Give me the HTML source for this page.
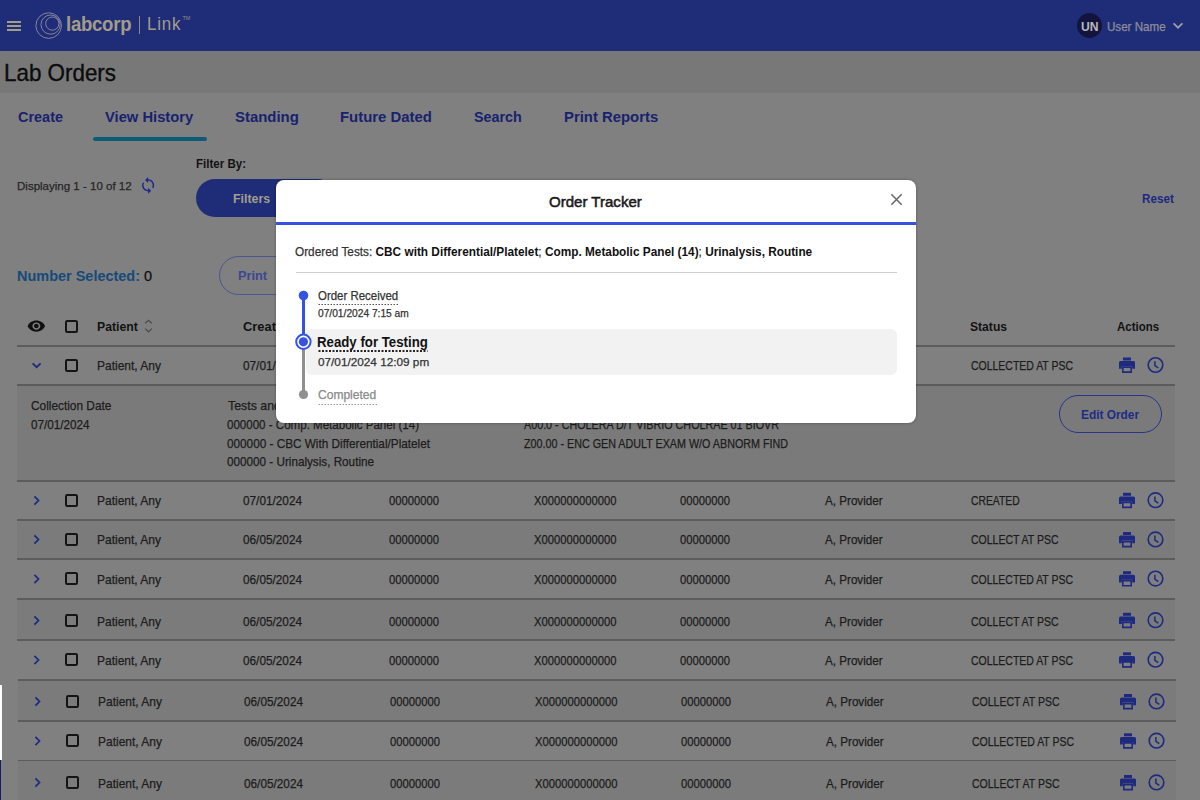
<!DOCTYPE html>
<html><head><meta charset="utf-8"><title>Lab Orders</title>
<style>
*{margin:0;padding:0;box-sizing:border-box}
html,body{width:1200px;height:800px;overflow:hidden;background:#808080;font-family:"Liberation Sans",sans-serif}
.a{position:absolute}
.tx{position:absolute;white-space:nowrap;line-height:1;transform-origin:0 50%}
.tx.r{-webkit-text-stroke:0.25px currentColor}
.tx b{font-weight:700;color:#111;-webkit-text-stroke:0}
#hdr{left:0;top:0;width:1200px;height:51px;background:#1f2c78}
#bar{left:0;top:51px;width:1200px;height:42px;background:#787878}
.rowbg{position:absolute;left:17px;width:1158px;background:#808080}
.zeb{background:#7b7b7b}
.bd{position:absolute;left:17px;width:1158px;height:1.6px;background:#5c5c5c}
.cb{position:absolute;width:12.6px;height:12.6px;border:2.1px solid #141414;border-radius:2.2px}
.modal{position:absolute;left:276px;top:180px;width:640px;height:243px;background:#fff;border-radius:8px;box-shadow:0 0 3px rgba(0,0,0,.35)}
svg{position:absolute;overflow:visible}
</style></head><body>
<div class="a" id="hdr"></div>
<!-- hamburger -->
<div class="a" style="left:7px;top:21px;width:14px;height:1.6px;background:#a39d88"></div>
<div class="a" style="left:7px;top:25px;width:14px;height:1.6px;background:#a39d88"></div>
<div class="a" style="left:7px;top:29px;width:14px;height:1.6px;background:#a39d88"></div>
<!-- logo -->
<svg style="left:0;top:0" width="200" height="51">
 <g fill="none" stroke="#85859c" stroke-width="1">
  <circle cx="48.7" cy="25.6" r="12.8"/>
  <circle cx="50.6" cy="24.6" r="9.6"/>
  <circle cx="52.3" cy="23.6" r="6.6"/>
 </g>
</svg>
<div class="tx" style="left:66px;top:13.5px;font-size:20px;font-weight:700;color:#a39d88;letter-spacing:-0.3px;transform:scaleX(0.93)">labcorp</div>
<div class="a" style="left:138.5px;top:16px;width:1.2px;height:18px;background:#8c8a86"></div>
<div class="tx" style="left:147px;top:15.4px;font-size:18.2px;font-weight:400;color:#a39d88;letter-spacing:0.9px;transform:scaleX(0.93)">Link</div>
<div class="tx" style="left:182.5px;top:15.5px;font-size:5.5px;color:#8f8c8a">TM</div>
<!-- UN avatar -->
<div class="a" style="left:1076.8px;top:13.2px;width:25px;height:25px;border-radius:50%;background:#12143e"></div>
<svg style="left:1170px;top:18px" width="16" height="14"><path d="M3.6 5.4 L8 9.6 L12.4 5.4" fill="none" stroke="#9b9ba4" stroke-width="1.9"/></svg>

<div class="a" id="bar"></div>
<!-- tab underline -->
<div class="a" style="left:93px;top:137.3px;width:113.5px;height:3.4px;border-radius:2px;background:#0b5c74"></div>
<!-- refresh icon -->
<svg style="left:139px;top:176px" width="20" height="20" viewBox="0 0 20 20">
 <g transform="translate(0,0.25) scale(0.76)"><path fill="#1d2a88" d="M12 4V1L8 5l4 4V6c3.31 0 6 2.69 6 6 0 1.01-.25 1.97-.7 2.8l1.46 1.46C19.540 15.03 20 13.570 20 12c0-4.42-3.58-8-8-8zm0 14c-3.310 0-6-2.690-6-6 0-1.010.25-1.970.7-2.800L5.240 7.740C4.460 8.970 4 10.430 4 12c0 4.420 3.580 8 8 8v3l4-4-4-4v3z"/></g>
</svg>
<!-- Filters button -->
<div class="a" style="left:196px;top:179px;width:140px;height:38px;border-radius:19px;background:#1f2c78"></div>
<!-- Print button -->
<div class="a" style="left:219px;top:256px;width:110px;height:38.5px;border-radius:20px;border:1.3px solid #4a5594"></div>

<!-- table -->
<div class="rowbg zeb" style="top:385px;height:96px;background:#7a7a7a"></div>
<div class="rowbg zeb" style="top:520px;height:39px"></div>
<div class="rowbg zeb" style="top:599px;height:41px"></div>
<div class="rowbg zeb" style="top:680px;height:41px;left:18px"></div>
<div class="rowbg zeb" style="top:761px;height:39px;left:18px"></div>
<div class="bd" style="top:345px"></div>
<div class="bd" style="top:384px"></div>
<div class="bd" style="top:480px"></div>
<div class="bd" style="top:519px"></div>
<div class="bd" style="top:558px"></div>
<div class="bd" style="top:598px"></div>
<div class="bd" style="top:639px"></div>
<div class="bd" style="top:679px;left:18px"></div>
<div class="bd" style="top:720px;left:18px"></div>
<div class="bd" style="top:759.5px;left:18px"></div>
<!-- left strip artifact -->
<div class="a" style="left:0;top:685px;width:1.5px;height:75px;background:#fff"></div>
<div class="a" style="left:0;top:760px;width:1.2px;height:40px;background:#161c6a"></div>

<!-- eye icon -->
<svg style="left:0;top:0" width="60" height="340">
 <path transform="translate(26.8,317.2) scale(0.795,0.74)" fill="#101010" d="M12 4.5C7 4.5 2.73 7.61 1 12c1.73 4.39 6 7.5 11 7.5s9.27-3.11 11-7.5c-1.730-4.390-6-7.500-11-7.500zM12 17c-2.76 0-5-2.24-5-5s2.24-5 5-5 5 2.24 5 5-2.24 5-5 5zm0-8c-1.66 0-3 1.34-3 3s1.34 3 3 3 3-1.34 3-3-1.34-3-3-3z"/>
</svg>
<div class="cb" style="left:65px;top:320px"></div>
<!-- sort icon -->
<svg style="left:143px;top:318px" width="11" height="16" viewBox="0 0 11 16">
 <path d="M2.2 5.2 L5.5 2.2 L8.8 5.2 M2.2 10.6 L5.5 13.9 L8.8 10.6" fill="none" stroke="#4a4a4a" stroke-width="1.2"/>
</svg>

<!-- row icons -->
<svg style="left:0;top:0" width="1200" height="800">
 <defs>
  <g id="chev"><path d="M-2.1 -4.1 L2.0 0 L-2.1 4.1" fill="none" stroke="#1d2a80" stroke-width="1.75"/></g>
  <g id="pr">
   <path d="M4 0 H12 V3 H4 Z" fill="#1d2a80"/>
   <path d="M1.5 3.6 H14.5 Q16 3.6 16 5.1 V11.2 H13.2 V8.6 H2.8 V11.2 H0 V5.1 Q0 3.6 1.5 3.6 Z" fill="#1d2a80"/>
   <path d="M3.8 9.6 H12.2 V14.6 H3.8 Z" fill="none" stroke="#1d2a80" stroke-width="1.6"/>
  </g>
  <g id="ck">
   <circle cx="0" cy="0" r="7.3" fill="none" stroke="#1d2a80" stroke-width="1.6"/>
   <path d="M-0.6 -3.8 V0.6 L2.8 3" fill="none" stroke="#1d2a80" stroke-width="1.5"/>
  </g>
 </defs>
 <path d="M32.6 363.3 L36.6 367.2 L40.6 363.3" fill="none" stroke="#1d2a80" stroke-width="1.8"/>
 <use href="#chev" x="36.5" y="500.5"/>
 <use href="#chev" x="36.5" y="539.5"/>
 <use href="#chev" x="36.5" y="579"/>
 <use href="#chev" x="36.5" y="620.5"/>
 <use href="#chev" x="36.5" y="660"/>
 <use href="#chev" x="37.5" y="701.5"/>
 <use href="#chev" x="37.5" y="741"/>
 <use href="#chev" x="37.5" y="782.5"/>
 <use href="#pr" x="1119" y="357.5"/>
 <use href="#ck" x="1155.5" y="365"/>
 <use href="#pr" x="1119" y="492.8"/>
 <use href="#ck" x="1155.5" y="500.2"/>
 <use href="#pr" x="1119" y="532"/>
 <use href="#ck" x="1155.5" y="539.4"/>
 <use href="#pr" x="1119" y="571.2"/>
 <use href="#ck" x="1155.5" y="578.6"/>
 <use href="#pr" x="1119" y="612.8"/>
 <use href="#ck" x="1155.5" y="620.2"/>
 <use href="#pr" x="1119" y="652.3"/>
 <use href="#ck" x="1155.5" y="659.7"/>
 <use href="#pr" x="1120" y="694"/>
 <use href="#ck" x="1156.5" y="701.4"/>
 <use href="#pr" x="1120" y="733.3"/>
 <use href="#ck" x="1156.5" y="740.7"/>
 <use href="#pr" x="1120" y="775"/>
 <use href="#ck" x="1156.5" y="782.4"/>
</svg>
<div class="cb" style="left:65px;top:359px"></div>
<div class="cb" style="left:65px;top:494px"></div>
<div class="cb" style="left:65px;top:533px"></div>
<div class="cb" style="left:65px;top:572px"></div>
<div class="cb" style="left:65px;top:614px"></div>
<div class="cb" style="left:65px;top:653px"></div>
<div class="cb" style="left:66px;top:695px"></div>
<div class="cb" style="left:66px;top:734px"></div>
<div class="cb" style="left:66px;top:776px"></div>
<!-- Edit Order button -->
<div class="a" style="left:1059.3px;top:395px;width:102.7px;height:38px;border-radius:19px;border:1.8px solid #27358a"></div>

<div class="tx r" id="t0" style="left:1107.00px;top:22.00px;font-size:11.92px;font-weight:400;color:#8d8d98;transform:scaleX(0.9737);">User Name</div>
<div class="tx" id="t1" style="left:1080.60px;top:22.00px;font-size:11.92px;font-weight:600;color:#b9b9b9;transform:scaleX(1.0200);">UN</div>
<div class="tx r" id="t2" style="left:4.40px;top:62.00px;font-size:23.26px;font-weight:400;color:#0c0c0c;transform:scaleX(0.9631);-webkit-text-stroke:0.35px #0c0c0c">Lab Orders</div>
<div class="tx" id="t3" style="left:18.00px;top:110.00px;font-size:14.83px;font-weight:700;color:#18226e;transform:scaleX(0.9749);">Create</div>
<div class="tx" id="t4" style="left:104.80px;top:110.00px;font-size:14.83px;font-weight:700;color:#18226e;transform:scaleX(0.9940);">View History</div>
<div class="tx" id="t5" style="left:235.20px;top:110.00px;font-size:14.83px;font-weight:700;color:#18226e;transform:scaleX(1.0068);">Standing</div>
<div class="tx" id="t6" style="left:340.20px;top:110.00px;font-size:14.83px;font-weight:700;color:#18226e;transform:scaleX(1.0040);">Future Dated</div>
<div class="tx" id="t7" style="left:474.20px;top:110.00px;font-size:14.83px;font-weight:700;color:#18226e;transform:scaleX(0.9664);">Search</div>
<div class="tx" id="t8" style="left:563.80px;top:110.00px;font-size:14.83px;font-weight:700;color:#18226e;transform:scaleX(1.0031);">Print Reports</div>
<div class="tx" id="t9" style="left:196.20px;top:158.00px;font-size:12.06px;font-weight:700;color:#121212;transform:scaleX(0.9592);">Filter By:</div>
<div class="tx r" id="t10" style="left:16.80px;top:180.00px;font-size:11.63px;font-weight:400;color:#262626;transform:scaleX(0.9908);">Displaying 1 - 10 of 12</div>
<div class="tx" id="t11" style="left:233.00px;top:193.00px;font-size:12.06px;font-weight:700;color:#a29e90;transform:scaleX(1.0254);">Filters</div>
<div class="tx" id="t12" style="left:1142.20px;top:193.00px;font-size:12.65px;font-weight:700;color:#1c2a80;transform:scaleX(0.9245);">Reset</div>
<div class="tx" id="t13" style="left:17.00px;top:268.00px;font-size:15.26px;font-weight:700;color:#164a78;transform:scaleX(0.9488);">Number Selected:</div>
<div class="tx r" id="t14" style="left:144.00px;top:268.00px;font-size:15.26px;font-weight:400;color:#101010;transform:scaleX(0.9513);">0</div>
<div class="tx" id="t15" style="left:238.00px;top:269.00px;font-size:13.52px;font-weight:700;color:#3c4890;transform:scaleX(0.9429);">Print</div>
<div class="tx" id="t16" style="left:97.20px;top:321.00px;font-size:12.50px;font-weight:700;color:#121212;transform:scaleX(0.9794);">Patient</div>
<div class="tx" id="t17" style="left:243.00px;top:321.00px;font-size:12.50px;font-weight:700;color:#121212;transform:scaleX(1.0322);">Created</div>
<div class="tx" id="t18" style="left:970.40px;top:321.00px;font-size:12.50px;font-weight:700;color:#121212;transform:scaleX(0.9693);">Status</div>
<div class="tx" id="t19" style="left:1117.00px;top:321.00px;font-size:12.50px;font-weight:700;color:#121212;transform:scaleX(0.9162);">Actions</div>
<div class="tx r" id="t20" style="left:97.20px;top:360.00px;font-size:12.79px;font-weight:400;color:#1c1c1c;transform:scaleX(0.9384);">Patient, Any</div>
<div class="tx r" id="t21" style="left:243.00px;top:360.00px;font-size:12.79px;font-weight:400;color:#1c1c1c;transform:scaleX(0.9225);">07/01/2024</div>
<div class="tx r" id="t22" style="left:971.40px;top:360.00px;font-size:12.79px;font-weight:400;color:#1c1c1c;transform:scaleX(0.8190);">COLLECTED AT PSC</div>
<div class="tx r" id="t23" style="left:97.20px;top:495.00px;font-size:12.79px;font-weight:400;color:#1c1c1c;transform:scaleX(0.9384);">Patient, Any</div>
<div class="tx r" id="t24" style="left:243.00px;top:495.00px;font-size:12.79px;font-weight:400;color:#1c1c1c;transform:scaleX(0.9225);">07/01/2024</div>
<div class="tx r" id="t25" style="left:389.00px;top:495.00px;font-size:12.79px;font-weight:400;color:#1c1c1c;transform:scaleX(0.8793);">00000000</div>
<div class="tx r" id="t26" style="left:534.00px;top:495.00px;font-size:12.79px;font-weight:400;color:#1c1c1c;transform:scaleX(0.8782);">X000000000000</div>
<div class="tx r" id="t27" style="left:680.00px;top:495.00px;font-size:12.79px;font-weight:400;color:#1c1c1c;transform:scaleX(0.8791);">00000000</div>
<div class="tx r" id="t28" style="left:825.40px;top:495.00px;font-size:12.79px;font-weight:400;color:#1c1c1c;transform:scaleX(0.9109);">A, Provider</div>
<div class="tx r" id="t29" style="left:971.40px;top:495.00px;font-size:12.79px;font-weight:400;color:#1c1c1c;transform:scaleX(0.8084);">CREATED</div>
<div class="tx r" id="t30" style="left:97.20px;top:534.00px;font-size:12.79px;font-weight:400;color:#1c1c1c;transform:scaleX(0.9384);">Patient, Any</div>
<div class="tx r" id="t31" style="left:243.00px;top:534.00px;font-size:12.79px;font-weight:400;color:#1c1c1c;transform:scaleX(0.9225);">06/05/2024</div>
<div class="tx r" id="t32" style="left:389.00px;top:534.00px;font-size:12.79px;font-weight:400;color:#1c1c1c;transform:scaleX(0.8793);">00000000</div>
<div class="tx r" id="t33" style="left:534.00px;top:534.00px;font-size:12.79px;font-weight:400;color:#1c1c1c;transform:scaleX(0.8782);">X000000000000</div>
<div class="tx r" id="t34" style="left:680.00px;top:534.00px;font-size:12.79px;font-weight:400;color:#1c1c1c;transform:scaleX(0.8791);">00000000</div>
<div class="tx r" id="t35" style="left:825.40px;top:534.00px;font-size:12.79px;font-weight:400;color:#1c1c1c;transform:scaleX(0.9109);">A, Provider</div>
<div class="tx r" id="t36" style="left:971.40px;top:534.00px;font-size:12.79px;font-weight:400;color:#1c1c1c;transform:scaleX(0.8221);">COLLECT AT PSC</div>
<div class="tx r" id="t37" style="left:97.20px;top:574.00px;font-size:12.79px;font-weight:400;color:#1c1c1c;transform:scaleX(0.9384);">Patient, Any</div>
<div class="tx r" id="t38" style="left:243.00px;top:574.00px;font-size:12.79px;font-weight:400;color:#1c1c1c;transform:scaleX(0.9225);">06/05/2024</div>
<div class="tx r" id="t39" style="left:389.00px;top:574.00px;font-size:12.79px;font-weight:400;color:#1c1c1c;transform:scaleX(0.8793);">00000000</div>
<div class="tx r" id="t40" style="left:534.00px;top:574.00px;font-size:12.79px;font-weight:400;color:#1c1c1c;transform:scaleX(0.8782);">X000000000000</div>
<div class="tx r" id="t41" style="left:680.00px;top:574.00px;font-size:12.79px;font-weight:400;color:#1c1c1c;transform:scaleX(0.8791);">00000000</div>
<div class="tx r" id="t42" style="left:825.40px;top:574.00px;font-size:12.79px;font-weight:400;color:#1c1c1c;transform:scaleX(0.9109);">A, Provider</div>
<div class="tx r" id="t43" style="left:971.40px;top:574.00px;font-size:12.79px;font-weight:400;color:#1c1c1c;transform:scaleX(0.8190);">COLLECTED AT PSC</div>
<div class="tx r" id="t44" style="left:97.20px;top:616.00px;font-size:12.79px;font-weight:400;color:#1c1c1c;transform:scaleX(0.9384);">Patient, Any</div>
<div class="tx r" id="t45" style="left:243.00px;top:616.00px;font-size:12.79px;font-weight:400;color:#1c1c1c;transform:scaleX(0.9225);">06/05/2024</div>
<div class="tx r" id="t46" style="left:389.00px;top:616.00px;font-size:12.79px;font-weight:400;color:#1c1c1c;transform:scaleX(0.8793);">00000000</div>
<div class="tx r" id="t47" style="left:534.00px;top:616.00px;font-size:12.79px;font-weight:400;color:#1c1c1c;transform:scaleX(0.8782);">X000000000000</div>
<div class="tx r" id="t48" style="left:680.00px;top:616.00px;font-size:12.79px;font-weight:400;color:#1c1c1c;transform:scaleX(0.8791);">00000000</div>
<div class="tx r" id="t49" style="left:825.40px;top:616.00px;font-size:12.79px;font-weight:400;color:#1c1c1c;transform:scaleX(0.9109);">A, Provider</div>
<div class="tx r" id="t50" style="left:971.40px;top:616.00px;font-size:12.79px;font-weight:400;color:#1c1c1c;transform:scaleX(0.8221);">COLLECT AT PSC</div>
<div class="tx r" id="t51" style="left:97.20px;top:655.00px;font-size:12.79px;font-weight:400;color:#1c1c1c;transform:scaleX(0.9384);">Patient, Any</div>
<div class="tx r" id="t52" style="left:243.00px;top:655.00px;font-size:12.79px;font-weight:400;color:#1c1c1c;transform:scaleX(0.9225);">06/05/2024</div>
<div class="tx r" id="t53" style="left:389.00px;top:655.00px;font-size:12.79px;font-weight:400;color:#1c1c1c;transform:scaleX(0.8793);">00000000</div>
<div class="tx r" id="t54" style="left:534.00px;top:655.00px;font-size:12.79px;font-weight:400;color:#1c1c1c;transform:scaleX(0.8782);">X000000000000</div>
<div class="tx r" id="t55" style="left:680.00px;top:655.00px;font-size:12.79px;font-weight:400;color:#1c1c1c;transform:scaleX(0.8791);">00000000</div>
<div class="tx r" id="t56" style="left:825.40px;top:655.00px;font-size:12.79px;font-weight:400;color:#1c1c1c;transform:scaleX(0.9109);">A, Provider</div>
<div class="tx r" id="t57" style="left:971.40px;top:655.00px;font-size:12.79px;font-weight:400;color:#1c1c1c;transform:scaleX(0.8190);">COLLECTED AT PSC</div>
<div class="tx r" id="t58" style="left:98.20px;top:696.00px;font-size:12.79px;font-weight:400;color:#1c1c1c;transform:scaleX(0.9384);">Patient, Any</div>
<div class="tx r" id="t59" style="left:244.00px;top:696.00px;font-size:12.79px;font-weight:400;color:#1c1c1c;transform:scaleX(0.9225);">06/05/2024</div>
<div class="tx r" id="t60" style="left:390.00px;top:696.00px;font-size:12.79px;font-weight:400;color:#1c1c1c;transform:scaleX(0.8793);">00000000</div>
<div class="tx r" id="t61" style="left:535.00px;top:696.00px;font-size:12.79px;font-weight:400;color:#1c1c1c;transform:scaleX(0.8782);">X000000000000</div>
<div class="tx r" id="t62" style="left:681.00px;top:696.00px;font-size:12.79px;font-weight:400;color:#1c1c1c;transform:scaleX(0.8791);">00000000</div>
<div class="tx r" id="t63" style="left:826.40px;top:696.00px;font-size:12.79px;font-weight:400;color:#1c1c1c;transform:scaleX(0.9109);">A, Provider</div>
<div class="tx r" id="t64" style="left:972.40px;top:696.00px;font-size:12.79px;font-weight:400;color:#1c1c1c;transform:scaleX(0.8221);">COLLECT AT PSC</div>
<div class="tx r" id="t65" style="left:98.20px;top:736.00px;font-size:12.79px;font-weight:400;color:#1c1c1c;transform:scaleX(0.9384);">Patient, Any</div>
<div class="tx r" id="t66" style="left:244.00px;top:736.00px;font-size:12.79px;font-weight:400;color:#1c1c1c;transform:scaleX(0.9225);">06/05/2024</div>
<div class="tx r" id="t67" style="left:390.00px;top:736.00px;font-size:12.79px;font-weight:400;color:#1c1c1c;transform:scaleX(0.8793);">00000000</div>
<div class="tx r" id="t68" style="left:535.00px;top:736.00px;font-size:12.79px;font-weight:400;color:#1c1c1c;transform:scaleX(0.8782);">X000000000000</div>
<div class="tx r" id="t69" style="left:681.00px;top:736.00px;font-size:12.79px;font-weight:400;color:#1c1c1c;transform:scaleX(0.8791);">00000000</div>
<div class="tx r" id="t70" style="left:826.40px;top:736.00px;font-size:12.79px;font-weight:400;color:#1c1c1c;transform:scaleX(0.9109);">A, Provider</div>
<div class="tx r" id="t71" style="left:972.40px;top:736.00px;font-size:12.79px;font-weight:400;color:#1c1c1c;transform:scaleX(0.8190);">COLLECTED AT PSC</div>
<div class="tx r" id="t72" style="left:98.20px;top:778.00px;font-size:12.79px;font-weight:400;color:#1c1c1c;transform:scaleX(0.9384);">Patient, Any</div>
<div class="tx r" id="t73" style="left:244.00px;top:778.00px;font-size:12.79px;font-weight:400;color:#1c1c1c;transform:scaleX(0.9225);">06/05/2024</div>
<div class="tx r" id="t74" style="left:390.00px;top:778.00px;font-size:12.79px;font-weight:400;color:#1c1c1c;transform:scaleX(0.8793);">00000000</div>
<div class="tx r" id="t75" style="left:535.00px;top:778.00px;font-size:12.79px;font-weight:400;color:#1c1c1c;transform:scaleX(0.8782);">X000000000000</div>
<div class="tx r" id="t76" style="left:681.00px;top:778.00px;font-size:12.79px;font-weight:400;color:#1c1c1c;transform:scaleX(0.8791);">00000000</div>
<div class="tx r" id="t77" style="left:826.40px;top:778.00px;font-size:12.79px;font-weight:400;color:#1c1c1c;transform:scaleX(0.9109);">A, Provider</div>
<div class="tx r" id="t78" style="left:972.40px;top:778.00px;font-size:12.79px;font-weight:400;color:#1c1c1c;transform:scaleX(0.8221);">COLLECT AT PSC</div>
<div class="tx r" id="t79" style="left:30.60px;top:400.00px;font-size:12.79px;font-weight:400;color:#1c1c1c;transform:scaleX(0.9275);">Collection Date</div>
<div class="tx r" id="t80" style="left:30.60px;top:419.00px;font-size:12.79px;font-weight:400;color:#1c1c1c;transform:scaleX(0.9161);">07/01/2024</div>
<div class="tx r" id="t81" style="left:228.00px;top:400.00px;font-size:12.79px;font-weight:400;color:#1c1c1c;transform:scaleX(0.9684);">Tests and Diagnosis Codes</div>
<div class="tx r" id="t82" style="left:227.00px;top:419.00px;font-size:12.79px;font-weight:400;color:#1c1c1c;transform:scaleX(0.9038);">000000 - Comp. Metabolic Panel (14)</div>
<div class="tx r" id="t83" style="left:227.00px;top:438.00px;font-size:12.79px;font-weight:400;color:#1c1c1c;transform:scaleX(0.9198);">000000 - CBC With Differential/Platelet</div>
<div class="tx r" id="t84" style="left:227.00px;top:456.00px;font-size:12.79px;font-weight:400;color:#1c1c1c;transform:scaleX(0.9155);">000000 - Urinalysis, Routine</div>
<div class="tx r" id="t85" style="left:524.00px;top:419.00px;font-size:12.79px;font-weight:400;color:#1c1c1c;transform:scaleX(0.8414);">A00.0 - CHOLERA D/T VIBRIO CHOLRAE 01 BIOVR</div>
<div class="tx r" id="t86" style="left:524.00px;top:438.00px;font-size:12.79px;font-weight:400;color:#1c1c1c;transform:scaleX(0.8404);">Z00.00 - ENC GEN ADULT EXAM W/O ABNORM FIND</div>
<div class="tx" id="t87" style="left:1080.80px;top:409.00px;font-size:12.21px;font-weight:700;color:#1e2c86;transform:scaleX(0.9723);">Edit Order</div>

<!-- modal -->
<div class="modal"></div>
<div class="a" style="left:276px;top:222px;width:640px;height:3px;background:#3553e2"></div>
<svg style="left:886px;top:189px" width="20" height="20"><path d="M5.3 5.3 L15.7 15.7 M15.7 5.3 L5.3 15.7" stroke="#666" stroke-width="1.5"/></svg>
<div class="a" style="left:296px;top:271.5px;width:601px;height:1.3px;background:#cfcfcf"></div>
<div class="a" style="left:306px;top:329px;width:591px;height:46px;border-radius:6px;background:#f2f2f2"></div>
<svg style="left:0;top:0" width="1200" height="800">
 <line x1="303.5" y1="296" x2="303.5" y2="336" stroke="#3553e2" stroke-width="3"/>
 <line x1="303.5" y1="349" x2="303.5" y2="394" stroke="#8f8f8f" stroke-width="3"/>
 <circle cx="303.5" cy="295.5" r="4.8" fill="#3553e2"/>
 <circle cx="303.4" cy="341.8" r="7.2" fill="#fff" stroke="#3553e2" stroke-width="2"/>
 <circle cx="303.4" cy="341.8" r="4.6" fill="#3553e2"/>
 <circle cx="303.5" cy="394.5" r="4.6" fill="#8f8f8f"/>
 <line x1="318.5" y1="304.5" x2="399" y2="304.5" stroke="#555" stroke-width="1" stroke-dasharray="1.5 1.5"/>
 <line x1="318.5" y1="351" x2="427.5" y2="351" stroke="#222" stroke-width="1.8" stroke-dasharray="2 1.5"/>
 <line x1="318.5" y1="404.5" x2="377" y2="404.5" stroke="#999" stroke-width="1" stroke-dasharray="1.5 1.5"/>
</svg>
<div class="tx r" id="t88" style="left:549.00px;top:194.00px;font-size:15.55px;font-weight:400;color:#1a1a1a;transform:scaleX(0.9677);-webkit-text-stroke:0.55px #1a1a1a">Order Tracker</div>
<div class="tx r" id="t89" style="left:295.40px;top:245.00px;font-size:13.08px;font-weight:400;color:#333333;transform:scaleX(0.9034);">Ordered Tests: <b>CBC with Differential/Platelet</b>; <b>Comp. Metabolic Panel (14)</b>; <b>Urinalysis, Routine</b></div>
<div class="tx r" id="t90" style="left:317.80px;top:290.00px;font-size:12.06px;font-weight:400;color:#333333;transform:scaleX(0.9506);">Order Received</div>
<div class="tx r" id="t91" style="left:317.80px;top:308.00px;font-size:10.61px;font-weight:400;color:#333333;transform:scaleX(0.9620);">07/01/2024 7:15 am</div>
<div class="tx" id="t92" style="left:317.40px;top:336.00px;font-size:13.95px;font-weight:700;color:#111111;transform:scaleX(0.9499);">Ready for Testing</div>
<div class="tx r" id="t93" style="left:317.80px;top:357.00px;font-size:11.48px;font-weight:400;color:#333333;transform:scaleX(1.0258);">07/01/2024 12:09 pm</div>
<div class="tx r" id="t94" style="left:317.80px;top:390.00px;font-size:11.92px;font-weight:400;color:#8a8a8a;transform:scaleX(1.0109);">Completed</div>
</body></html>
